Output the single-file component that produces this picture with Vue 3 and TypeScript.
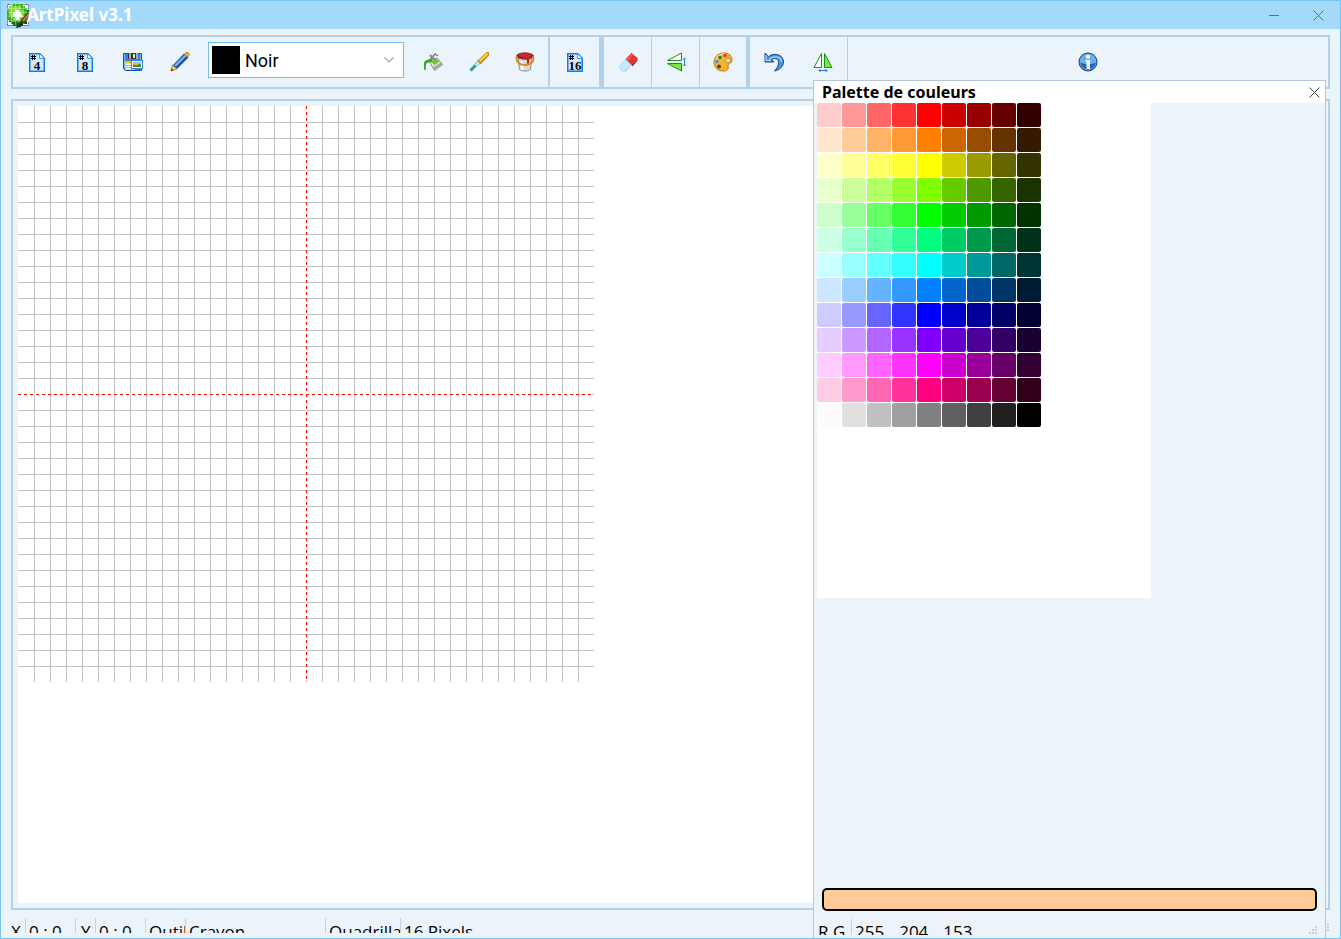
<script setup lang="ts">
import { ref } from 'vue'

type Rgb = [number, number, number]

const hues: Rgb[] = [
  [255, 0, 0], [255, 128, 0], [255, 255, 0], [128, 255, 0],
  [0, 255, 0], [0, 255, 128], [0, 255, 255], [0, 128, 255],
  [0, 0, 255], [128, 0, 255], [255, 0, 255], [255, 0, 128],
]
const steps = [0.8, 0.6, 0.4, 0.2, 0, -0.2, -0.4, -0.6, -0.8]
const greys = [252, 224, 192, 160, 128, 96, 64, 32, 0]

function shade(c: Rgb, s: number): Rgb {
  return c.map((v) => Math.round(s >= 0 ? v + (255 - v) * s : v * (1 + s))) as Rgb
}

const swatches: Rgb[] = [
  ...hues.flatMap((h) => steps.map((s) => shade(h, s))),
  ...greys.map((g): Rgb => [g, g, g]),
]

const css = (c: Rgb) => `rgb(${c.join(',')})`
const picked = ref<Rgb>([255, 204, 153])
const colour = ref('Noir')
const lines = Array.from({ length: 35 }, (_, i) => (i + 1) * 16)

// Logo mosaic: one character per cell, dots stay white.
const mosaic = [
  '..lmmmmm...',
  '.llllllmm..',
  'lllllllmmm.',
  'mlllwwllmmd',
  'mllwwwwlmmd',
  'mllwwwwlmdd',
  'mmllwwllmdd',
  'mmmllllmddd',
  '.dmmmmmddd.',
  '..dddddddk.',
  '...ddddk...',
]
const tones: Record<string, string> = {
  l: '#7be03c', m: '#3cb51c', d: '#15780c', k: '#0d4a08', w: '#fbfff8',
}
const cells = mosaic.flatMap((row, y) =>
  [...row].flatMap((ch, x) => (tones[ch] ? [{ x: x * 2, y: y * 2, fill: tones[ch] }] : [])),
)
</script>

<template>
  <div class="window">
    <header class="titlebar">
      <svg class="logo" viewBox="0 0 23 25" aria-hidden="true">
        <rect x="0.5" y="1.500" width="21" height="21" fill="#fff" stroke="#46608a" stroke-dasharray="2 1" />
        <rect v-for="(c, i) in cells" :key="i" :x="c.x" :y="c.y + 1" width="2" height="2" :fill="c.fill" />
        <path d="M4.500 1v21M8.500 1v21M12.500 1v21M16.500 1v21M1 5.500h21M1 9.500h21M1 13.500h21M1 17.500h21" stroke="#e9ffe0" stroke-width="0.6" opacity="0.600" />
        <path d="M9 8h3v3h3v3h-3v3H9v-3H6v-3h3z" fill="#fbfff8" />
        <path d="M22 11l-7 8" stroke="#5a3320" stroke-width="4" />
        <path d="M22 11l-6 7" stroke="#d58a4e" stroke-width="1.800" />
        <path d="M13.500 18l3 3-3 3-5 1z" fill="#2b2b2b" />
      </svg>
      <h1>ArtPixel v3.1</h1>
      <button class="winbtn" aria-label="Réduire">
        <svg width="10" height="10"><path d="M0 5.500h10" stroke="#5d7180" /></svg>
      </button>
      <button class="winbtn" aria-label="Fermer">
        <svg width="11" height="11"><path d="M.5.5l10 10M10.500.5l-10 10" stroke="#5d7180" /></svg>
      </button>
    </header>

    <nav class="toolbar">
      <button class="tool w48" aria-label="Grille 4">
        <svg class="doc" viewBox="0 0 16 19">
          <path d="M.75.75h10l4.500 4.500v13H.75z" fill="#d3e8ff" stroke="#0c7cf2" stroke-width="1.500" />
          <path d="M10.500 1v4.500h4.500" fill="#fff" stroke="#4ba0f5" />
          <path d="M3.500 2v5M5.500 2v5M2 3.500h5M2 5.500h5" stroke="#000" />
          <text x="8" y="17" class="num">4</text>
        </svg>
      </button>
      <button class="tool w47" aria-label="Grille 8">
        <svg class="doc" viewBox="0 0 16 19">
          <path d="M.75.75h10l4.500 4.500v13H.75z" fill="#d3e8ff" stroke="#0c7cf2" stroke-width="1.500" />
          <path d="M10.500 1v4.500h4.500" fill="#fff" stroke="#4ba0f5" />
          <path d="M3.500 2v5M5.500 2v5M2 3.500h5M2 5.500h5" stroke="#000" />
          <text x="8" y="17" class="num">8</text>
        </svg>
      </button>
      <button class="tool w49" aria-label="Enregistrer">
        <svg class="ico" viewBox="0 0 20 20">
          <path d="M.5 1.500h18v17h-16l-2-2z" fill="#2e86e0" stroke="#1450a0" />
          <path d="M1.500 2v14M17.500 2v6" stroke="#74baf7" />
          <rect x="5" y="1" width="10" height="6" fill="#333" />
          <path d="M6 1h2v6H6zM13 1h2v6h-2z" fill="#aaa" />
          <rect x="10" y="2" width="2" height="4" fill="#e8e8e8" />
          <rect x="2.500" y="9.500" width="9" height="8" fill="#fff" stroke="#bfcbd6" />
          <path d="M3 10.500h5" stroke="#f2b705" stroke-width="2" />
          <path d="M3 13.500h5M3 15.500h5" stroke="#9dadb8" />
          <rect x="8.500" y="8.500" width="11" height="8" fill="#fff" stroke="#3182d8" />
          <rect x="10" y="10" width="8" height="2" fill="#8cc4f5" />
          <path d="M10 12h8v3h-8z" fill="#4e8c2a" />
          <path d="M10 13l3-2 3 2z" fill="#e5b84b" />
        </svg>
      </button>
      <button class="tool w46" aria-label="Crayon">
        <svg class="ico" viewBox="0 0 20 20">
          <path d="M2 18l1-5L14 1.500l4.500 4L7 17z" fill="#17559f" />
          <path d="M4 13L14.500 2.500l2 1.500L6 15z" fill="#4b9df0" />
          <path d="M5.500 13.500L16 3.500" stroke="#a4d2fb" />
          <path d="M1 19l1.500-6 4.500 4z" fill="#f5cc88" stroke="#a56c28" stroke-width="0.7" />
          <path d="M1 19l.5-2.500 2 1.800z" fill="#222" />
          <path d="M14.500 2.500L16 .5h2l1.500 2L17.500 5z" fill="#f3b33a" stroke="#925a1a" stroke-width="0.7" />
        </svg>
      </button>

      <div class="picker">
        <span class="chip"></span>
        <select v-model="colour" aria-label="Couleur">
          <option>Noir</option>
          <option>Blanc</option>
        </select>
        <svg class="chev" width="10" height="6" aria-hidden="true"><path d="M.5.5L5 5 9.500.5" fill="none" stroke="#93a9b8" stroke-width="1.200" /></svg>
      </div>

      <div class="group">
        <button class="tool w47" aria-label="Remplir">
          <svg class="ico" viewBox="0 0 20 20">
            <path d="M6 9l6-7 3 2" fill="none" stroke="#777" stroke-width="1.400" />
            <path d="M6 9l8-3 5.500 6.500-8 6z" fill="#e2e2e2" stroke="#888" />
            <path d="M11.500 18l8-5.500-1.500-2-8 5z" fill="#a6a6a6" />
            <path d="M8 9.500l5-2.500 3.500 2.500-5 3.500z" fill="#64cb24" />
            <path d="M7 3l5 5" stroke="#888" stroke-width="2.200" />
            <path d="M9 7c-4 0-8 2-8 4v6c0 2 2 1 2-1v-3c0-2 2-3 6-3z" fill="#39ad16" />
          </svg>
        </button>
        <button class="tool w46" aria-label="Pipette">
          <svg class="ico" viewBox="0 0 20 20">
            <path d="M1.500 18.500L10 10" stroke="#6ba3d3" stroke-width="3.400" />
            <path d="M1.500 18.500L10 10" stroke="#d7f2ff" stroke-width="2" />
            <path d="M1.500 18.500l5-5" stroke="#1cab3e" stroke-width="2.200" />
            <path d="M10.500 10l6-6" stroke="#b87812" stroke-width="4.400" />
            <path d="M17 3.500l1.500-1.500" stroke="#c98812" stroke-width="4" stroke-linecap="round" />
            <path d="M10.500 9.500l8-8" stroke="#ffcf36" stroke-width="2.400" />
            <path d="M8.500 8l4 4" stroke="#d18b13" stroke-width="1.600" />
          </svg>
        </button>
        <button class="tool w46" aria-label="Pot de peinture">
          <svg class="ico" viewBox="0 0 20 20">
            <path d="M3 4l1.500 13.500c2 2 9 2 11 0L17 4z" fill="#d8dbdc" stroke="#8a8f92" />
            <path d="M6.500 9l1 9" stroke="#fff" stroke-width="2.500" />
            <ellipse cx="10" cy="4" rx="8.500" ry="3.200" fill="#941414" stroke="#7d5b4b" />
            <ellipse cx="10" cy="3.500" rx="6.500" ry="1.800" fill="#d92727" />
            <path d="M7 5h9l-2 3v3c-1 2-2 1-2-1V8z" fill="#c81c1c" />
            <path d="M2 4c-2 5 2 9 8 9s10-4 8-9" fill="none" stroke="#d88a20" stroke-width="1.800" />
          </svg>
        </button>
      </div>
      <i class="rule w2"></i>
      <button class="tool w49" aria-label="Grille 16">
        <svg class="doc" viewBox="0 0 16 19">
          <path d="M.75.75h10l4.500 4.500v13H.75z" fill="#d3e8ff" stroke="#0c7cf2" stroke-width="1.500" />
          <path d="M10.500 1v4.500h4.500" fill="#fff" stroke="#4ba0f5" />
          <path d="M3.500 2v5M5.500 2v5M2 3.500h5M2 5.500h5" stroke="#000" />
          <text x="8" y="17" class="num">16</text>
        </svg>
      </button>
      <i class="rule w5"></i>
      <button class="tool w47" aria-label="Gomme">
        <svg class="ico" viewBox="0 0 20 20">
          <path d="M1 14L13 1.500l6 4.500L8 19.500H5L1 16z" fill="#8fc4ed" />
          <path d="M1 14l6-6 6 5-6 6H5l-4-3.500z" fill="#cbe8fb" />
          <path d="M8 7l5.500-6 6 5-6 7z" fill="#e33431" />
          <path d="M8 7l5.500-6 2 1.500-5 6.500z" fill="#f0504a" />
          <path d="M13.500 13l6-7v2.500l-5 6z" fill="#9e2020" />
        </svg>
      </button>
      <i class="rule w1"></i>
      <button class="tool w47" aria-label="Miroir vertical">
        <svg class="ico" viewBox="0 0 20 20">
          <path d="M1.500 8.500L15.500 1v7.500z" fill="#fff" stroke="#129512" />
          <path d="M1.500 11.500h14V19z" fill="#7ce843" stroke="#129512" />
          <path d="M18.500 6v8M17 7.500L18.500 6 20 7.500M17 12.500l1.500 1.500 1.500-1.500" fill="none" stroke="#1e7cf0" />
        </svg>
      </button>
      <i class="rule w1"></i>
      <button class="tool w46" aria-label="Palette">
        <svg class="ico" viewBox="0 0 20 20">
          <path d="M11 1C5 1 1 5 1 10c0 6 4 9 9 9 4 0 6-2 5-5-1-2 4-2 4-6 0-4-3-7-8-7z" fill="#f6b42c" stroke="#c87b12" />
          <path d="M3 8c1-4 5-6 9-6" fill="none" stroke="#ffdf80" stroke-width="1.500" />
          <circle cx="15" cy="8.500" r="2.500" fill="#ecf4fb" stroke="#c87b12" />
          <circle cx="7" cy="5.500" r="1.800" fill="#18862c" />
          <circle cx="12" cy="3.500" r="1.700" fill="#e63329" />
          <circle cx="4" cy="9.500" r="1.700" fill="#3b8ee8" />
          <circle cx="6" cy="14.500" r="2" fill="#444" />
        </svg>
      </button>
      <i class="rule w4"></i>
      <button class="tool w48" aria-label="Annuler">
        <svg class="ico" viewBox="0 0 20 20">
          <path d="M1 1v9h9L7.500 7.500c4-2 7-.5 7 3 0 4-2 6-4 8.500 5-1 9-4.500 9-9C19.500 3 11 0 4.500 4.500z" fill="#4595e2" stroke="#184a88" />
          <path d="M2 3v5.500h4L5.500 7c6-4 12-2 12 3" fill="none" stroke="#a5d5fa" stroke-width="1.200" />
        </svg>
      </button>
      <button class="tool w49" aria-label="Miroir horizontal">
        <svg class="ico" viewBox="0 0 20 20">
          <path d="M8.500 1.500v14H1z" fill="#fff" stroke="#129512" />
          <path d="M11.500 1.500v14H19z" fill="#7ce843" stroke="#129512" />
          <path d="M6 18.500h8M7.500 17L6 18.500 7.500 20M12.500 17l1.500 1.500-1.500 1.500" fill="none" stroke="#1e7cf0" />
        </svg>
      </button>
      <i class="rule w1"></i>
      <button class="tool grow" aria-label="Informations">
        <svg class="ico" viewBox="0 0 20 20">
          <circle cx="10" cy="10" r="9" fill="#2566b8" stroke="#173f78" />
          <path d="M2 10a8 8 0 0 1 16 0c-4 3-12 3-16 0z" fill="#6aaeee" />
          <circle cx="10" cy="10" r="8" fill="none" stroke="#8fc2f2" stroke-width="0.6" />
          <rect x="8" y="3" width="4" height="3.500" rx="1" fill="#fff" />
          <path d="M7.500 8H12v9H8.500v-7.500h-1z" fill="#fff" />
        </svg>
      </button>
    </nav>

    <main class="board">
      <div class="paper">
        <svg class="grid" width="576" height="576" role="img" aria-label="Grille de dessin">
          <g fill="#c0c0c0">
            <rect v-for="n in lines" :key="'v' + n" :x="n" y="0" width="1" height="576" />
            <rect v-for="n in lines" :key="'h' + n" x="0" :y="n" width="576" height="1" />
          </g>
          <path d="M288.500 0v574M0 288.500h574" stroke="#fff" />
          <path d="M288.500 0v574M0 288.500h574" stroke="#f00" stroke-dasharray="3 3" />
        </svg>
      </div>
    </main>

    <footer class="status">
      <span class="c20">X</span>
      <span class="c50">0 : 0</span>
      <span class="c20">Y</span>
      <span class="c50">0 : 0</span>
      <span class="c40">Outil</span>
      <span class="c140">Crayon</span>
      <span class="c75">Quadrillage</span>
      <span class="rest">16 Pixels</span>
    </footer>
    <svg class="grip" width="12" height="12" aria-hidden="true"><path d="M9 0h2v2H9zM9 3h2v2H9zM9 6h2v2H9zM6 3h2v2H6zM6 6h2v2H6zM3 6h2v2H3z" fill="#c2d1dd" /></svg>

    <section class="dialog" role="dialog" aria-labelledby="dlg">
      <header class="dlghead">
        <h2 id="dlg">Palette de couleurs</h2>
        <button class="dlgclose" aria-label="Fermer la palette">
          <svg width="11" height="11"><path d="M.5.5l10 10M10.500.5l-10 10" stroke="#3c4144" /></svg>
        </button>
      </header>
      <div class="sheet">
        <div class="swatches">
          <button
            v-for="(c, i) in swatches"
            :key="i"
            class="swatch"
            :style="{ background: css(c) }"
            :aria-label="c.join(' ')"
            @click="picked = c"
          ></button>
        </div>
      </div>
      <div class="current" :style="{ background: css(picked) }"></div>
      <footer class="dlgstatus">
        <span class="rgb">R G B</span>
        <span class="vals"><b v-for="(v, i) in picked" :key="i">{{ v }}</b></span>
        <svg class="dlggrip" width="9" height="8" aria-hidden="true"><path d="M6 0h2v2H6zM6 3h2v2H6zM6 6h2v2H6zM3 3h2v2H3zM3 6h2v2H3zM0 6h2v2H0z" fill="#c2d1dd" /></svg>
      </footer>
    </section>
  </div>
</template>

<style>
body {
  margin: 0;
}
</style>

<style scoped>
* {
  box-sizing: border-box;
}
button {
  padding: 0;
  border: 0;
  background: none;
  font: inherit;
}
svg {
  display: block;
}
.window {
  position: relative;
  display: flex;
  flex-direction: column;
  height: 100vh;
  overflow: hidden;
  border: 1px solid #78c4f6;
  background: #ecf4fb;
  font-family: "Noto Sans", "Open Sans", sans-serif;
  color: #000;
}
.titlebar {
  display: flex;
  flex: none;
  align-items: center;
  height: 28px;
  padding-left: 6px;
  background: #a4d9f9;
}
.logo {
  width: 23px;
  height: 25px;
  margin-right: -3px;
}
h1 {
  flex: 1;
  margin: 0;
  font-size: 17px;
  line-height: 28px;
  font-weight: 700;
  color: #fff;
}
.winbtn {
  display: grid;
  place-items: center;
  width: 44px;
  height: 28px;
}
.toolbar {
  display: flex;
  flex: none;
  height: 54px;
  margin: 6px 10px 0;
  border: 2px solid #b3d2ea;
  background: #ebf4fa;
}
.tool {
  display: grid;
  flex: none;
  place-items: center;
}
.ico {
  width: 20px;
  height: 20px;
}
.doc {
  width: 16px;
  height: 19px;
}
.num {
  font: 700 13px "Liberation Serif", serif;
  text-anchor: middle;
}
.w46 { width: 46px; }
.w47 { width: 47px; }
.w48 { width: 48px; }
.w49 { width: 49px; }
.grow { flex: 1; }
.rule {
  flex: none;
  background: #b3d2ea;
}
.w1 { width: 1px; }
.w2 { width: 2px; }
.w4 { width: 4px; }
.w5 { width: 5px; }
.picker {
  display: grid;
  flex: none;
  align-items: center;
  width: 196px;
  height: 36px;
  margin: 5px 0 0 5px;
  background: #fff;
}
.picker > * {
  grid-area: 1 / 1;
}
.picker select {
  width: 100%;
  height: 100%;
  padding: 0 24px 0 36px;
  border: 1px solid #78bce8;
  border-radius: 0;
  appearance: none;
  background: transparent;
  font: 18px Roboto, "Liberation Sans", sans-serif;
  color: #000;
}
.chip {
  width: 28px;
  height: 28px;
  margin-left: 4px;
  background: #000;
}
.chev {
  justify-self: end;
  margin-right: 10px;
  pointer-events: none;
}
.group {
  display: flex;
  flex: none;
  width: 144px;
  padding-left: 5px;
}
.board {
  flex: 1;
  min-height: 0;
  margin: 10px 10px 0;
  padding: 5px;
  border: 2px solid #b3d2ea;
  background: #ebf4fa;
}
.paper {
  height: 100%;
  overflow: hidden;
  background: #fff;
}
.status {
  display: flex;
  flex: none;
  height: 15px;
  margin: 8px 0 5px;
  padding-left: 5px;
  overflow: hidden;
  font: 17px "Open Sans", "Noto Sans", sans-serif;
  line-height: 27px;
  white-space: nowrap;
}
.status span {
  flex: none;
  padding-left: 3px;
  overflow: hidden;
  border-right: 1px solid #c3d4e0;
}
.status .c20 {
  width: 20px;
  padding-left: 5px;
}
.c50 { width: 50px; }
.c40 { width: 40px; }
.c140 { width: 140px; }
.c75 { width: 75px; }
.status .rest {
  flex: 1;
  border-right: 0;
}
.grip {
  position: absolute;
  right: 10px;
  bottom: 3px;
}
.dialog {
  position: absolute;
  top: 79px;
  right: 14px;
  bottom: 0;
  display: flex;
  flex-direction: column;
  width: 513px;
  border: 1px solid #b6c6d8;
  border-bottom: 0;
  background: #ecf4fa;
}
.dlghead {
  display: flex;
  flex: none;
  align-items: center;
  justify-content: space-between;
  height: 22px;
  padding: 0 5px 0 8px;
  background: #fff;
}
h2 {
  margin: 0;
  font-size: 16px;
  line-height: 22px;
  font-weight: 700;
}
.sheet {
  width: 334px;
  height: 495px;
  margin-left: 3px;
  background: #fff;
}
.swatches {
  display: grid;
  grid-template-columns: repeat(9, 24px);
  grid-auto-rows: 24px;
  gap: 1px;
}
.swatch {
  border-radius: 2px;
}
.current {
  flex: none;
  height: 23px;
  margin: auto 8px 8px;
  border: 2px solid #000;
  border-radius: 5px;
}
.dlgstatus {
  display: flex;
  flex: none;
  height: 16px;
  margin-bottom: 3px;
  padding-left: 4px;
  overflow: hidden;
  font: 17px "Open Sans", "Noto Sans", sans-serif;
  line-height: 26px;
  white-space: nowrap;
}
.rgb {
  width: 34px;
  overflow: hidden;
  border-right: 1px solid #c3d4e0;
}
.vals {
  display: flex;
  flex: 1;
  gap: 15px;
  padding-left: 3px;
}
.vals b {
  font-weight: 400;
}
.dlggrip {
  align-self: flex-end;
  margin: 0 7px 1px 0;
}
</style>
